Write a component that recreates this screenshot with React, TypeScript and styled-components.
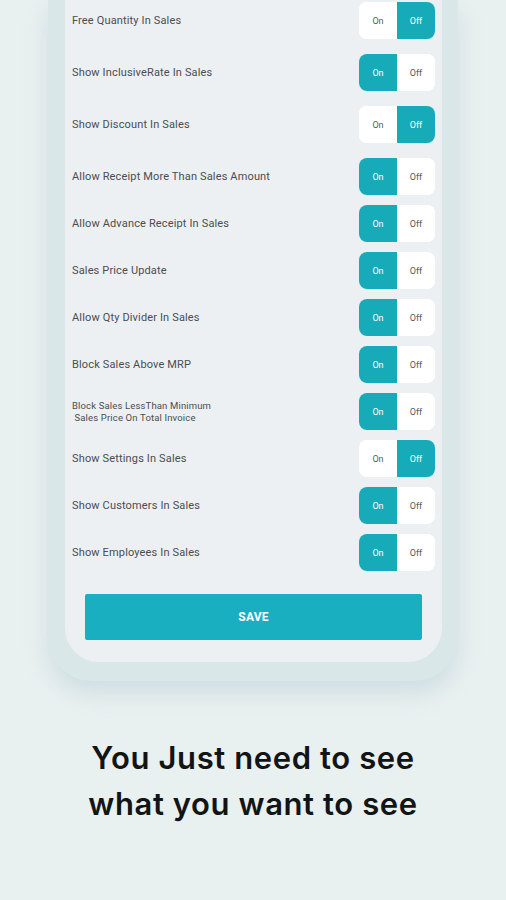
import React, { useState } from "react";
import styled, { createGlobalStyle } from "styled-components";

const GlobalStyle = createGlobalStyle`
    html, body {
        margin: 0;
        padding: 0;
        background: #e9f0f0;
    }
    body {
        font-family: Roboto, "Liberation Sans", sans-serif;
    }
`;

//#region Layout

const Page = styled.div`
    width: 506px;
    height: 900px;
    display: flex;
    flex-direction: column;
    align-items: center;
    overflow: hidden;
    background: #e9f0f0;
`;

const PhoneFrame = styled.div`
    width: 410px;
    box-sizing: border-box;
    padding: 0 16px 19px 17px;
    background: #d9e7e9;
    border-radius: 0 0 44px 44px;
    box-shadow: 0 12px 22px rgba(160, 190, 200, 0.35);
`;

const Screen = styled.div`
    background: #edf0f3;
    border-radius: 0 0 34px 34px;
    padding: 2px 7px 22px 7px;
    display: flex;
    flex-direction: column;
`;

//#endregion

//#region Setting row

interface RowProps {
    $gap: number;
}

const Row = styled.div<RowProps>`
    display: flex;
    align-items: center;
    justify-content: space-between;
    height: 37px;
    margin-bottom: ${props => props.$gap}px;
`;

const Label = styled.div`
    font-size: 11px;
    color: #4a4d50;
    line-height: 13px;
    letter-spacing: 0.15px;
    white-space: pre-wrap;
`;

const SmallLabel = styled(Label)`
    font-size: 9.5px;
    line-height: 12px;
`;

const Toggle = styled.div`
    display: flex;
    width: 76px;
    height: 37px;
    border-radius: 8px;
    overflow: hidden;
    background: #ffffff;
`;

interface HalfProps {
    $active: boolean;
}

const Half = styled.button<HalfProps>`
    flex: 1;
    border: none;
    padding: 0;
    font-family: Roboto, "Liberation Sans", sans-serif;
    font-size: 9px;
    cursor: pointer;
    background: ${props => props.$active ? "#17aab9" : "#ffffff"};
    color: ${props => props.$active ? "#ffffff" : "#555a5e"};
`;

//#endregion

const SaveButton = styled.button`
    margin: 23px 13px 0 13px;
    height: 46px;
    border: none;
    border-radius: 2px;
    background: #1aafc0;
    color: #ffffff;
    font-family: Roboto, "Liberation Sans", sans-serif;
    font-weight: 700;
    font-size: 12px;
    letter-spacing: 0.2px;
`;

const Heading = styled.h1`
    margin: 54px 0 0 0;
    font-family: Inter, "Open Sans", sans-serif;
    font-weight: 600;
    font-size: 31px;
    line-height: 46px;
    color: #121416;
    text-align: center;
    letter-spacing: 0.6px;
`;

interface Setting {
    label: string;
    on: boolean;
    small?: boolean;
}

const initial: Setting[] = [
    { label: "Free Quantity In Sales", on: false },
    { label: "Show InclusiveRate In Sales", on: true },
    { label: "Show Discount In Sales", on: false },
    { label: "Allow Receipt More Than Sales Amount", on: true },
    { label: "Allow Advance Receipt In Sales", on: true },
    { label: "Sales Price Update", on: true },
    { label: "Allow Qty Divider In Sales", on: true },
    { label: "Block Sales Above MRP", on: true },
    { label: "Block Sales LessThan Minimum\n Sales Price On Total Invoice", on: true, small: true },
    { label: "Show Settings In Sales", on: false },
    { label: "Show Customers In Sales", on: true },
    { label: "Show Employees In Sales", on: true },
];

export default function App() {
    const [settings, setSettings] = useState<Setting[]>(initial);

    const set = (i: number, on: boolean) => {
        setSettings(s => s.map((x, j) => j === i ? { ...x, on } : x));
    };

    return (
        <Page>
            <GlobalStyle />
            <PhoneFrame>
                <Screen>
                    {settings.map((s, i) => {
                        // first rows sit a bit further apart than the rest
                        const gap = i === settings.length - 1 ? 0 : i < 3 ? 15 : 10;
                        const Text = s.small ? SmallLabel : Label;
                        return (
                            <Row key={s.label} $gap={gap}>
                                <Text>{s.label}</Text>
                                <Toggle>
                                    <Half $active={s.on} onClick={() => set(i, true)}>On</Half>
                                    <Half $active={!s.on} onClick={() => set(i, false)}>Off</Half>
                                </Toggle>
                            </Row>
                        );
                    })}
                    <SaveButton>SAVE</SaveButton>
                </Screen>
            </PhoneFrame>
            <Heading>
                You Just need to see
                <br />
                what you want to see
            </Heading>
        </Page>
    );
}
